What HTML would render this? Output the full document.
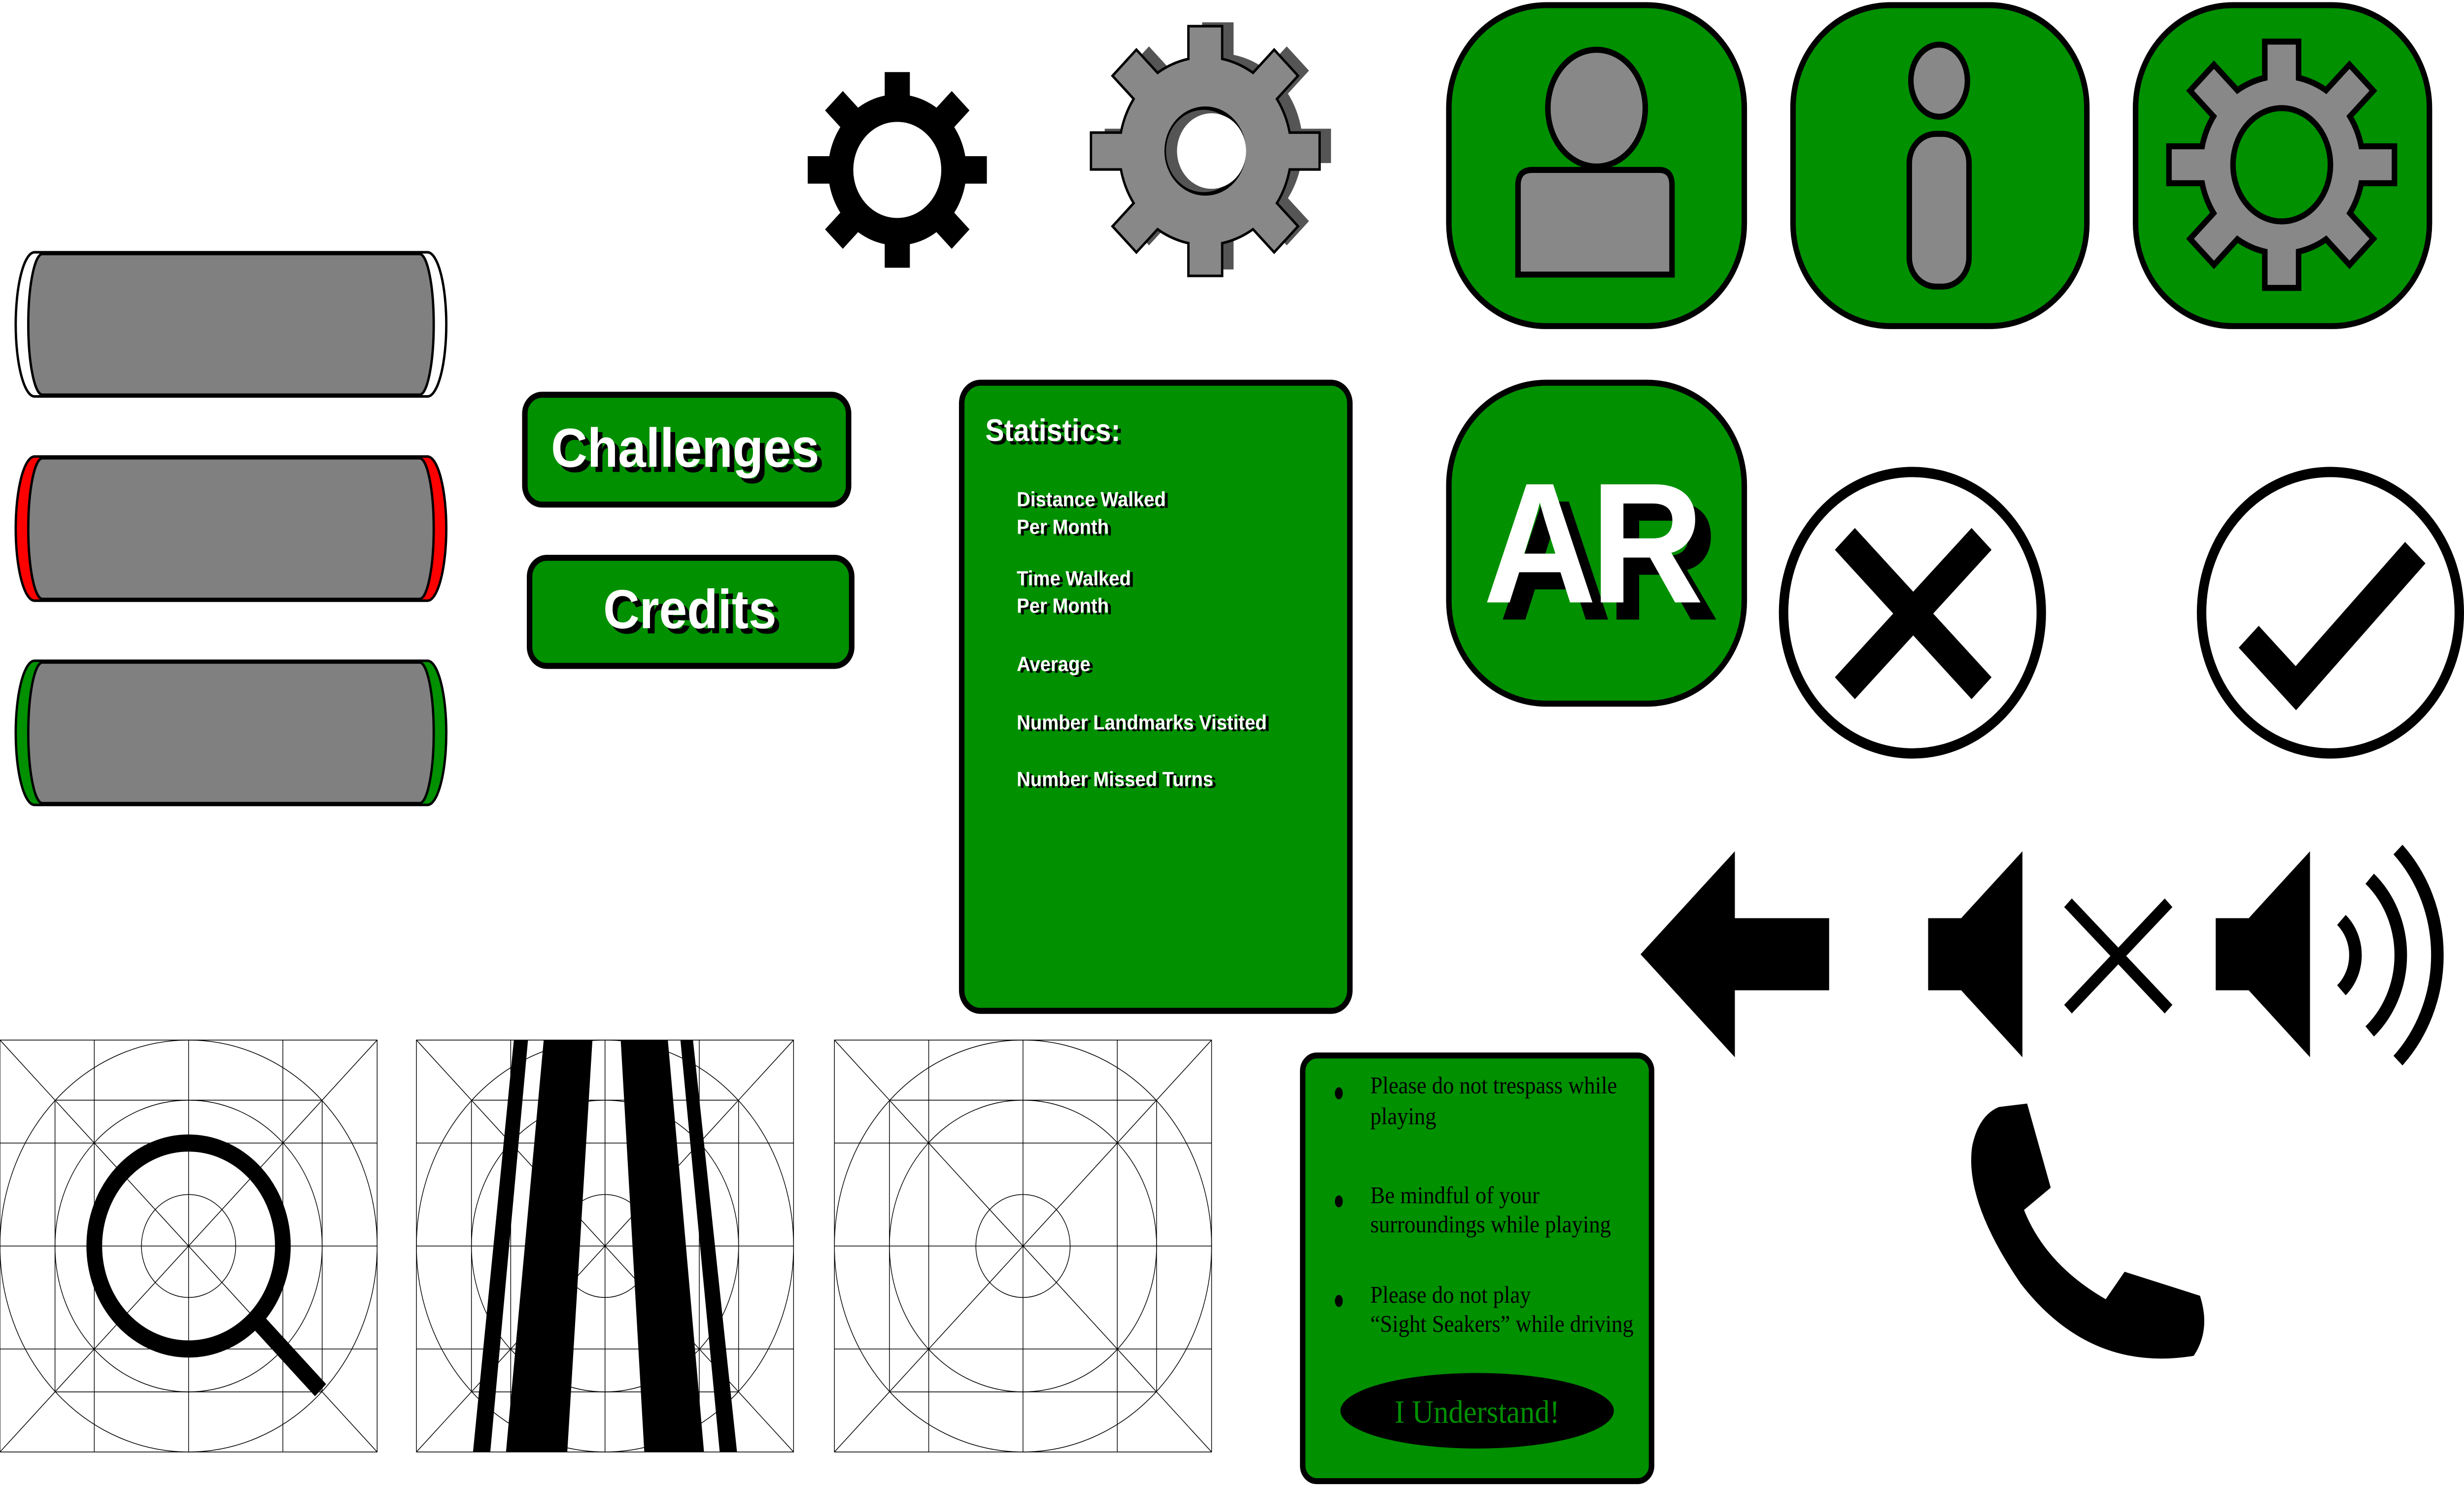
<!DOCTYPE html>
<html><head><meta charset="utf-8">
<style>
html,body{margin:0;padding:0;background:#fff;overflow:hidden;width:100%;height:100%}
svg{position:fixed;left:0;top:0;display:block;width:100vw;height:100vh}
.sh{font-family:"Liberation Sans",sans-serif;font-weight:bold}
.sf{font-family:"Liberation Serif",serif}
</style></head><body>
<svg viewBox="0 0 1568 867" preserveAspectRatio="none" xmlns="http://www.w3.org/2000/svg">
<defs>
  <g id="grid" fill="none" stroke="#000" stroke-width="0.45">
    <rect x="0" y="0" width="240" height="240"/>
    <line x1="60" y1="0" x2="60" y2="240"/><line x1="120" y1="0" x2="120" y2="240"/><line x1="180" y1="0" x2="180" y2="240"/>
    <line x1="0" y1="60" x2="240" y2="60"/><line x1="0" y1="120" x2="240" y2="120"/><line x1="0" y1="180" x2="240" y2="180"/>
    <rect x="35" y="35" width="170" height="170"/>
    <line x1="0" y1="0" x2="240" y2="240"/><line x1="240" y1="0" x2="0" y2="240"/>
    <circle cx="120" cy="120" r="120"/><circle cx="120" cy="120" r="85"/><circle cx="120" cy="120" r="30"/>
  </g>
  <g id="teethB">
    <rect x="-8" y="-57" width="16" height="24"/>
    <rect x="-8" y="-57" width="16" height="24" transform="rotate(45)"/>
    <rect x="-8" y="-57" width="16" height="24" transform="rotate(90)"/>
    <rect x="-8" y="-57" width="16" height="24" transform="rotate(135)"/>
    <rect x="-8" y="-57" width="16" height="24" transform="rotate(180)"/>
    <rect x="-8" y="-57" width="16" height="24" transform="rotate(225)"/>
    <rect x="-8" y="-57" width="16" height="24" transform="rotate(270)"/>
    <rect x="-8" y="-57" width="16" height="24" transform="rotate(315)"/>
    <circle r="44"/>
  </g>
  <g id="teethG">
    <rect x="-10" y="-72" width="20" height="30"/>
    <rect x="-10" y="-72" width="20" height="30" transform="rotate(45)"/>
    <rect x="-10" y="-72" width="20" height="30" transform="rotate(90)"/>
    <rect x="-10" y="-72" width="20" height="30" transform="rotate(135)"/>
    <rect x="-10" y="-72" width="20" height="30" transform="rotate(180)"/>
    <rect x="-10" y="-72" width="20" height="30" transform="rotate(225)"/>
    <rect x="-10" y="-72" width="20" height="30" transform="rotate(270)"/>
    <rect x="-10" y="-72" width="20" height="30" transform="rotate(315)"/>
    <circle r="54"/>
  </g>
  <g id="teethS">
    <rect x="-9" y="-70" width="18" height="26"/>
    <rect x="-9" y="-70" width="18" height="26" transform="rotate(45)"/>
    <rect x="-9" y="-70" width="18" height="26" transform="rotate(90)"/>
    <rect x="-9" y="-70" width="18" height="26" transform="rotate(135)"/>
    <rect x="-9" y="-70" width="18" height="26" transform="rotate(180)"/>
    <rect x="-9" y="-70" width="18" height="26" transform="rotate(225)"/>
    <rect x="-9" y="-70" width="18" height="26" transform="rotate(270)"/>
    <rect x="-9" y="-70" width="18" height="26" transform="rotate(315)"/>
    <circle r="50"/>
  </g>
</defs>

<!-- bars -->
<rect x="10" y="147" width="274" height="84" rx="12" ry="42" fill="#fff" stroke="#000" stroke-width="1.5"/>
<rect x="18" y="148" width="258" height="82" rx="9" ry="41" fill="#808080" stroke="#000" stroke-width="1.5"/>
<rect x="10" y="266" width="274" height="84" rx="12" ry="42" fill="#f00" stroke="#000" stroke-width="1.5"/>
<rect x="18" y="267" width="258" height="82" rx="9" ry="41" fill="#808080" stroke="#000" stroke-width="1.5"/>
<rect x="10" y="385" width="274" height="84" rx="12" ry="42" fill="#009000" stroke="#000" stroke-width="1.5"/>
<rect x="18" y="386" width="258" height="82" rx="9" ry="41" fill="#808080" stroke="#000" stroke-width="1.5"/>

<!-- buttons -->
<rect x="334" y="230" width="206" height="64" rx="11" fill="#009000" stroke="#000" stroke-width="3.5"/>
<text x="439" y="275" class="sh" font-size="32" text-anchor="middle" fill="#000">Challenges</text>
<text x="436" y="272" class="sh" font-size="32" text-anchor="middle" fill="#fff">Challenges</text>
<rect x="337" y="325" width="205" height="63" rx="11" fill="#009000" stroke="#000" stroke-width="3.5"/>
<text x="442" y="369" class="sh" font-size="32" text-anchor="middle" fill="#000">Credits</text>
<text x="439" y="366" class="sh" font-size="32" text-anchor="middle" fill="#fff">Credits</text>

<!-- stats -->
<rect x="612" y="223" width="247" height="366" rx="12" fill="#009000" stroke="#000" stroke-width="3.5"/>
<g class="sh" fill="#000">
<text x="629" y="259" font-size="18">Statistics:</text>
<g font-size="12"><text x="649" y="296">Distance Walked</text><text x="649" y="312">Per Month</text>
<text x="649" y="342">Time Walked</text><text x="649" y="358">Per Month</text>
<text x="649" y="392">Average</text><text x="649" y="426">Number Landmarks Vistited</text><text x="649" y="459">Number Missed Turns</text></g>
</g>
<g class="sh" fill="#fff">
<text x="627" y="257" font-size="18">Statistics:</text>
<g font-size="12"><text x="647" y="295">Distance Walked</text><text x="647" y="311">Per Month</text>
<text x="647" y="341">Time Walked</text><text x="647" y="357">Per Month</text>
<text x="647" y="391">Average</text><text x="647" y="425">Number Landmarks Vistited</text><text x="647" y="458">Number Missed Turns</text></g>
</g>

<!-- black gear -->
<g transform="translate(571,99)"><use href="#teethB" fill="#000"/><circle r="28" fill="#fff"/></g>

<!-- gray gear -->
<g transform="translate(775,85)"><use href="#teethG" fill="#555"/></g>
<g transform="translate(767,88)"><use href="#teethG" fill="#000" stroke="#000" stroke-width="3"/><use href="#teethG" fill="#888"/>
<circle r="26" fill="#000"/><circle cx="-1" r="24" fill="#555"/><circle cx="4" r="22" fill="#fff"/></g>

<!-- green icon buttons -->
<rect x="922" y="3" width="188" height="187" rx="62" ry="60" fill="#009000" stroke="#000" stroke-width="3.5"/>
<ellipse cx="1016" cy="63" rx="31" ry="34" fill="#888" stroke="#000" stroke-width="3.5"/>
<path d="M966,160 V108 Q966,99 975,99 H1056 Q1064,99 1064,108 V160 Z" fill="#888" stroke="#000" stroke-width="3.5"/>

<rect x="1141" y="3" width="187" height="187" rx="62" ry="60" fill="#009000" stroke="#000" stroke-width="3.5"/>
<ellipse cx="1234" cy="47" rx="18" ry="21" fill="#888" stroke="#000" stroke-width="3.5"/>
<rect x="1215" y="78" width="38" height="89" rx="17" fill="#888" stroke="#000" stroke-width="3.5"/>

<rect x="1359" y="3" width="187" height="187" rx="62" ry="60" fill="#009000" stroke="#000" stroke-width="3.5"/>
<g transform="translate(1452,96)"><use href="#teethS" fill="#000" stroke="#000" stroke-width="7"/><use href="#teethS" fill="#888"/>
<ellipse rx="31" ry="33" fill="#009000" stroke="#000" stroke-width="3.5"/></g>

<rect x="922" y="223" width="188" height="187" rx="62" ry="60" fill="#009000" stroke="#000" stroke-width="3.5"/>
<text x="1022" y="361" class="sh" font-size="100" font-weight="900" text-anchor="middle" letter-spacing="-4" fill="#000">AR</text>
<text x="1012" y="351" class="sh" font-size="100" font-weight="900" text-anchor="middle" letter-spacing="-4" fill="#fff">AR</text>

<!-- X circle -->
<circle cx="1217" cy="357" r="82" fill="#fff" stroke="#000" stroke-width="6"/>
<path d="M1174,314 L1261,401 M1261,314 L1174,401" stroke="#000" stroke-width="18"/>
<!-- check circle -->
<circle cx="1483" cy="357" r="82" fill="#fff" stroke="#000" stroke-width="6"/>
<path d="M1431,371 L1461,401 L1537,322" stroke="#000" stroke-width="18" fill="none" stroke-linejoin="miter"/>

<!-- back arrow -->
<polygon points="1044,556 1104,496 1104,535 1164,535 1164,577 1104,577 1104,616" fill="#000"/>
<!-- mute -->
<polygon points="1227,535 1248,535 1287,496 1287,616 1248,577 1227,577" fill="#000"/>
<path d="M1316,526 L1380,588 M1380,526 L1316,588" stroke="#000" stroke-width="7"/>
<!-- speaker -->
<polygon points="1410,535 1431,535 1470,496 1470,616 1431,577 1410,577" fill="#000"/>
<g fill="none" stroke="#000" stroke-width="8">
<path d="M1490,536 A28,28 0 0 1 1490,577"/>
<path d="M1508,512 A60,60 0 0 1 1508,601"/>
<path d="M1526,495 A88,88 0 0 1 1526,618"/>
</g>
<!-- phone -->
<path d="M1272,645 L1290,643 L1305,692 L1288,705 Q1302,737 1340,757 L1352,741 L1400,755 Q1407,775 1396,790 Q1330,800 1286,748 Q1250,700 1255,668 Q1259,650 1272,645 Z" fill="#000"/>

<!-- rules panel -->
<rect x="829" y="615" width="222" height="248" rx="9" fill="#009000" stroke="#000" stroke-width="3.5"/>
<g fill="#000"><ellipse cx="852" cy="637" rx="2.5" ry="3.5"/><ellipse cx="852" cy="700" rx="2.5" ry="3.5"/><ellipse cx="852" cy="758" rx="2.5" ry="3.5"/></g>
<g class="sf" font-size="14" fill="#000">
<text x="872" y="637">Please do not trespass while</text><text x="872" y="655">playing</text>
<text x="872" y="701">Be mindful of your</text><text x="872" y="718">surroundings while playing</text>
<text x="872" y="759">Please do not play</text><text x="872" y="776">“Sight Seakers” while driving</text>
</g>
<ellipse cx="940" cy="822" rx="87" ry="22" fill="#000"/>
<text x="940" y="829" class="sf" font-size="19" text-anchor="middle" fill="#009000">I Understand!</text>

<!-- grids -->
<g transform="translate(0,606)"><use href="#grid"/>
<circle cx="120" cy="120" r="60" fill="none" stroke="#000" stroke-width="10"/>
<line x1="165" y1="165" x2="204" y2="204" stroke="#000" stroke-width="10"/></g>
<g transform="translate(265,606)"><use href="#grid"/>
<polygon points="62,0 71,0 47,240 36,240" fill="#000"/>
<polygon points="81,0 112,0 96,240 57,240" fill="#000"/>
<polygon points="130,0 160,0 183,240 145,240" fill="#000"/>
<polygon points="168,0 176,0 204,240 193,240" fill="#000"/></g>
<g transform="translate(531,606)"><use href="#grid"/></g>
</svg>
</body></html>
